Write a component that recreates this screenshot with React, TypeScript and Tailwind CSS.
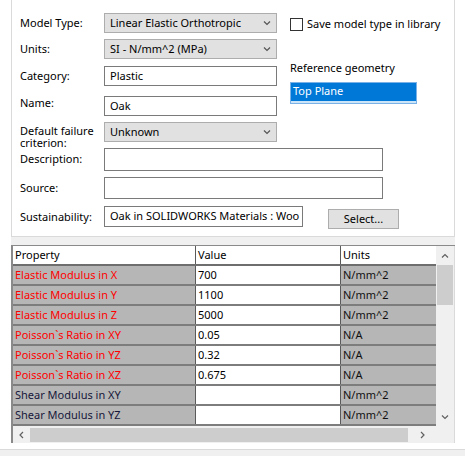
import React from "react";

const Chevron = ({ dir, className }: { dir: "up" | "down" | "left" | "right"; className?: string }) => {
  const d: Record<string, string> = {
    down: "M1 1.5 L4 4.5 L7 1.5",
    up: "M1 4.5 L4 1.5 L7 4.5",
    left: "M5 1 L2 4 L5 7",
    right: "M3 1 L6 4 L3 7",
  };
  const vb = dir === "up" || dir === "down" ? "0 0 8 6" : "0 0 8 8";
  const h = dir === "up" || dir === "down" ? 6 : 8;
  return (
    <svg width={8} height={h} viewBox={vb} className={className}>
      <path d={d[dir]} fill="none" stroke="currentColor" strokeWidth="1.2" />
    </svg>
  );
};

const Select = ({ value, w }: { value: string; w: string }) => (
  <div className={`${w} h-[20px] border border-[#adadad] bg-[#e1e1e1] flex items-center justify-between pl-[5px] pr-[5px]`}>
    <span className="text-black">{value}</span>
    <Chevron dir="down" className="text-[#555]" />
  </div>
);

const Input = ({ value, w, h }: { value?: string; w: string; h: string }) => (
  <div className={`${w} ${h} border border-[#7a7a7a] bg-white flex items-center pl-[5px] overflow-hidden whitespace-nowrap`}>
    <span className="text-black">{value}</span>
  </div>
);

type Row = { p: string; v: string; u: string; red: boolean };
const rows: Row[] = [
  { p: "Elastic Modulus in X", v: "700", u: "N/mm^2", red: true },
  { p: "Elastic Modulus in Y", v: "1100", u: "N/mm^2", red: true },
  { p: "Elastic Modulus in Z", v: "5000", u: "N/mm^2", red: true },
  { p: "Poisson`s Ratio in XY", v: "0.05", u: "N/A", red: true },
  { p: "Poisson`s Ratio in YZ", v: "0.32", u: "N/A", red: true },
  { p: "Poisson`s Ratio in XZ", v: "0.675", u: "N/A", red: true },
  { p: "Shear Modulus in XY", v: "", u: "N/mm^2", red: false },
  { p: "Shear Modulus in YZ", v: "", u: "N/mm^2", red: false },
];

export default function App() {
  return (
    <div
      className="w-[465px] h-[456px] bg-white overflow-hidden text-[11px] text-black flex flex-col"
      style={{ fontFamily: '"Noto Sans", "Liberation Sans", sans-serif' }}
    >
      {/* Top panel */}
      <div className="ml-[11px] w-[444px] h-[237px] shrink-0 border-l border-r border-b border-[#dadada] bg-white pl-[8px] pt-[13px] flex flex-col">
        <div className="flex">
          <div className="flex flex-col w-[257px]">
            <div className="flex items-center h-[20px]">
              <div className="w-[84px]">Model Type:</div>
              <Select value="Linear Elastic Orthotropic" w="w-[173px]" />
            </div>
            <div className="flex items-center h-[20px] mt-[6px]">
              <div className="w-[84px]">Units:</div>
              <Select value="SI - N/mm^2 (MPa)" w="w-[173px]" />
            </div>
            <div className="flex items-center h-[20px] mt-[7px]">
              <div className="w-[84px]">Category:</div>
              <Input value="Plastic" w="w-[173px]" h="h-[20px]" />
            </div>
            <div className="flex items-center h-[20px] mt-[10px]">
              <div className="w-[84px] -mt-[5px]">Name:</div>
              <Input value="Oak" w="w-[173px]" h="h-[20px]" />
            </div>
            <div className="flex items-start h-[20px] mt-[6px]">
              <div className="w-[84px] leading-[12px] pt-[3px]">Default failure criterion:</div>
              <Select value="Unknown" w="w-[173px]" />
            </div>
          </div>
          <div className="ml-[13px] flex flex-col">
            <div className="flex items-center mt-[3px]">
              <div className="w-[13px] h-[13px] border border-[#333] bg-white" />
              <span className="ml-[4px]">Save model type in library</span>
            </div>
            <div className="mt-[27px] leading-[15px]">Reference geometry</div>
            <div className="mt-[7px] w-[127px] h-[22px] border border-[#7ab2e8] bg-[#cce4f7] flex flex-col">
              <div className="h-[18px] bg-[#0078d7] text-white pl-[2px] flex items-center">Top Plane</div>
            </div>
          </div>
        </div>
        <div className="flex items-center h-[23px] mt-[6px]">
          <div className="w-[84px]">Description:</div>
          <Input w="w-[279px]" h="h-[23px]" />
        </div>
        <div className="flex items-center h-[22px] mt-[6px]">
          <div className="w-[84px]">Source:</div>
          <Input w="w-[279px]" h="h-[22px]" />
        </div>
        <div className="flex items-start h-[21px] mt-[7px]">
          <div className="w-[84px] self-center mt-[2px]">Sustainability:</div>
          <Input value="Oak in SOLIDWORKS Materials : Woo" w="w-[199px]" h="h-[21px]" />
          <div className="ml-[25px] mt-[3px] w-[71px] h-[20px] border border-[#adadad] bg-[#e1e1e1] flex items-center justify-center">
            Select...
          </div>
        </div>
      </div>

      {/* Table region */}
      <div className="ml-[11px] w-[444px] h-[206px] shrink-0 bg-[#f0f0f0] pt-[8px] flex flex-col">
        <div className="flex flex-col border-l-2 border-t border-[#8a8a8a] h-[198px]">
          <div className="flex h-[180px]">
            <div className="w-[423px] flex flex-col">
              <div className="flex h-[20px] bg-white border-b-2 border-[#6e6e6e]">
                <div className="w-[183px] border-r border-[#5a5a5a] pl-[2px] flex items-center">Property</div>
                <div className="w-[145px] border-r border-[#5a5a5a] pl-[2px] flex items-center">Value</div>
                <div className="flex-1 pl-[2px] flex items-center">Units</div>
              </div>
              {rows.map((r) => (
                <div key={r.p} className="flex h-[20px] border-b-2 border-[#7d7d7d]">
                  <div
                    className={`w-[183px] bg-[#b6b6b6] border-r border-[#5a5a5a] pl-[2px] flex items-center ${
                      r.red ? "text-[#ff0000]" : "text-[#16163a]"
                    }`}
                  >
                    {r.p}
                  </div>
                  <div className="w-[145px] bg-white border-r border-[#5a5a5a] pl-[2px] flex items-center">{r.v}</div>
                  <div className="flex-1 bg-[#b6b6b6] pl-[2px] flex items-center text-[#111]">{r.u}</div>
                </div>
              ))}
            </div>
            <div className="w-[19px] bg-[#f0f0f0] border-r border-[#dadada] flex flex-col items-center">
              <div className="h-[19px] flex items-center justify-center text-[#606060]">
                <Chevron dir="up" />
              </div>
              <div className="w-[16px] h-[40px] bg-[#cdcdcd]" />
              <div className="flex-1" />
              <div className="h-[19px] flex items-center justify-center text-[#606060]">
                <Chevron dir="down" />
              </div>
            </div>
          </div>
          <div className="flex h-[17px]">
            <div className="w-[423px] bg-[#f0f0f0] flex items-center">
              <div className="w-[17px] flex items-center justify-center text-[#606060]">
                <Chevron dir="left" />
              </div>
              <div className="w-[378px] h-[14px] bg-[#cdcdcd]" />
              <div className="flex-1 flex items-center justify-center text-[#606060]">
                <Chevron dir="right" />
              </div>
            </div>
            <div className="w-[19px] bg-[#f0f0f0] border-r border-[#dadada]" />
          </div>
        </div>
      </div>

      <div className="h-[6px] shrink-0" />
      <div className="flex-1 bg-[#f0f0f0] border-t border-[#dadada]" />
    </div>
  );
}
